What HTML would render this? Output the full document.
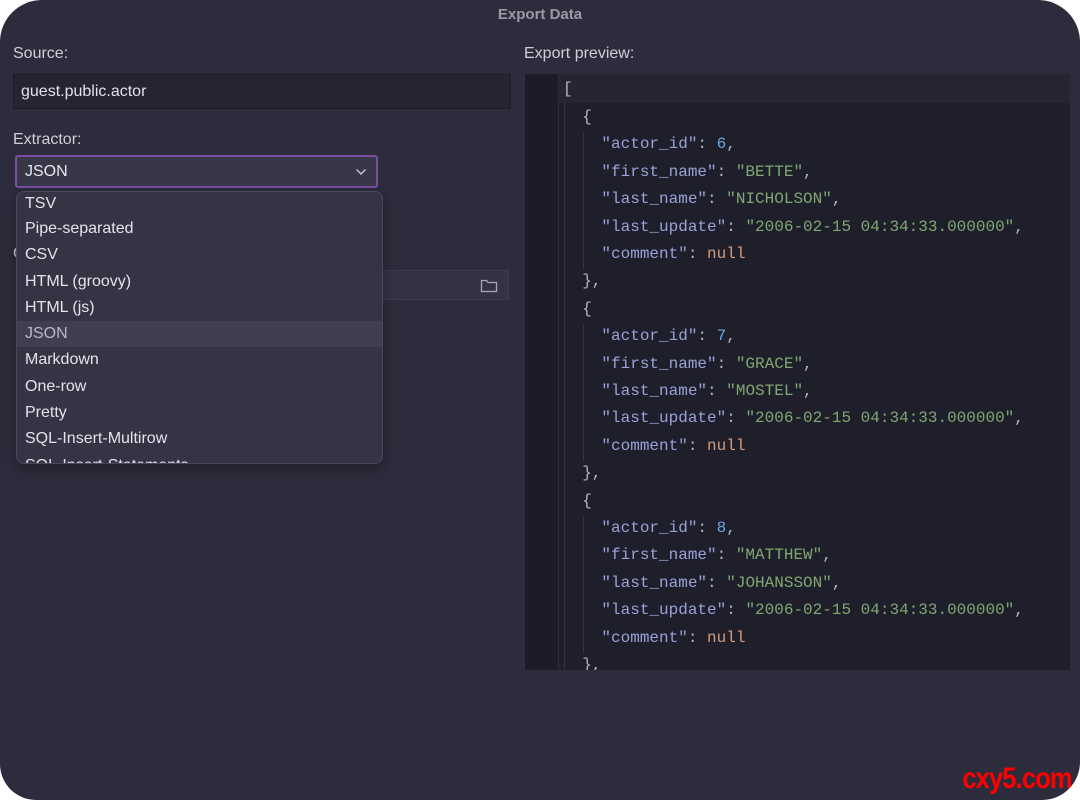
<!DOCTYPE html>
<html><head><style>
html,body{margin:0;padding:0;background:#fff;}
#win{position:relative;width:1080px;height:800px;background:#2d2c3c;border-radius:42px 42px 38px 36px;overflow:hidden;font-family:"Liberation Sans",sans-serif;color:#d6d5de;}
.t{position:absolute;}
.title{left:0;right:0;top:6px;text-align:center;font-weight:bold;font-size:15px;color:#9b9aa6;}
.lbl{font-size:16px;color:#cfced8;}
.inp{position:absolute;left:13px;top:74px;width:498px;height:35px;background:#252433;border:1px solid #1c1b27;box-sizing:border-box;font-size:16px;padding:8px 0 0 7px;color:#e2e1ea;}
.sel{position:absolute;left:15px;top:155px;width:363px;height:33px;background:#383747;border:2px solid #7a4fa3;border-radius:3px;box-sizing:border-box;font-size:16px;padding:6px 0 0 8px;color:#e8e7ef;}
.out{position:absolute;left:370px;top:270px;width:139px;height:30px;background:#343344;border:1px solid #3d3c4d;box-sizing:border-box;}
.dd{position:absolute;left:16px;top:191px;width:367px;height:273px;background:#353445;border:1px solid #4a4959;border-radius:8px;box-sizing:border-box;overflow:hidden;box-shadow:0 4px 14px rgba(0,0,0,.35);}
.dd div{height:26.3px;line-height:26.3px;font-size:16px;padding-left:8px;color:#e4e3eb;}
.dd .on{background:#403f51;color:#b9b8c4;}
.code{position:absolute;left:525px;top:74px;width:545px;height:596px;background:#1f1e2b;overflow:hidden;font-family:"Liberation Mono",monospace;font-size:16px;}
.gut{position:absolute;left:0;top:0;width:33px;height:100%;background:#1c1b27;border-right:1px solid #2e2d3b;}
.hl{position:absolute;left:34px;top:0;right:0;height:29px;background:#262534;}
.ln{position:absolute;left:38px;white-space:pre;color:#b5b4c2;height:27.4px;line-height:27.4px;}
.k{color:#9aa3d8}.s{color:#7fa872}.n{color:#6aa8e0}.nl{color:#d69a7c}.p{color:#b5b4c2}
.guide{position:absolute;width:1px;background:#33323f;}
.wm{position:absolute;right:8px;bottom:4px;color:#f00;font-weight:bold;font-size:30px;font-family:"Liberation Sans",sans-serif;letter-spacing:-1px;transform:scaleX(.85);transform-origin:right;}
</style></head><body>
<div id="win">
<div class="t title">Export Data</div>
<div class="t lbl" style="left:13px;top:45px">Source:</div>
<div class="inp">guest.public.actor</div>
<div class="t lbl" style="left:13px;top:131px">Extractor:</div>
<div class="t lbl" style="left:13px;top:245px">O</div>
<div class="out"><svg style="position:absolute;right:10px;top:7px" width="18" height="15" viewBox="0 0 18 15"><path d="M1.5 2.5h5l1.5 2h8.5v9h-15z" fill="none" stroke="#a9a8b4" stroke-width="1.3"/></svg></div>
<div class="sel">JSON<svg style="position:absolute;right:9px;top:11px" width="12" height="8" viewBox="0 0 12 8"><path d="M1.5 1.5l4.5 4.5 4.5-4.5" fill="none" stroke="#c8c7d2" stroke-width="1.4"/></svg></div>
<div class="dd">
<div style="height:24px;line-height:24px">TSV</div>
<div>Pipe-separated</div><div>CSV</div><div>HTML (groovy)</div><div>HTML (js)</div>
<div class="on">JSON</div><div>Markdown</div><div>One-row</div><div>Pretty</div><div>SQL-Insert-Multirow</div><div>SQL-Insert-Statements</div>
</div>
<div class="t lbl" style="left:524px;top:45px">Export preview:</div>
<div class="code">
<div class="gut"></div><div class="hl"></div>
<div class="guide" style="left:39px;top:29px;height:600px"></div>
<div class="guide" style="left:58px;top:58px;height:137px"></div>
<div class="guide" style="left:58px;top:250px;height:137px"></div>
<div class="guide" style="left:58px;top:442px;height:137px"></div>
<div class="ln" style="top:2px">[</div>
<div class="ln" style="top:30px">  {</div>
<div class="ln" style="top:57.4px">    <span class="k">"actor_id"</span>: <span class="n">6</span>,</div>
<div class="ln" style="top:84.8px">    <span class="k">"first_name"</span>: <span class="s">"BETTE"</span>,</div>
<div class="ln" style="top:112.2px">    <span class="k">"last_name"</span>: <span class="s">"NICHOLSON"</span>,</div>
<div class="ln" style="top:139.6px">    <span class="k">"last_update"</span>: <span class="s">"2006-02-15 04:34:33.000000"</span>,</div>
<div class="ln" style="top:167px">    <span class="k">"comment"</span>: <span class="nl">null</span></div>
<div class="ln" style="top:194.4px">  },</div>
<div class="ln" style="top:221.8px">  {</div>
<div class="ln" style="top:249.2px">    <span class="k">"actor_id"</span>: <span class="n">7</span>,</div>
<div class="ln" style="top:276.6px">    <span class="k">"first_name"</span>: <span class="s">"GRACE"</span>,</div>
<div class="ln" style="top:304px">    <span class="k">"last_name"</span>: <span class="s">"MOSTEL"</span>,</div>
<div class="ln" style="top:331.4px">    <span class="k">"last_update"</span>: <span class="s">"2006-02-15 04:34:33.000000"</span>,</div>
<div class="ln" style="top:358.8px">    <span class="k">"comment"</span>: <span class="nl">null</span></div>
<div class="ln" style="top:386.2px">  },</div>
<div class="ln" style="top:413.6px">  {</div>
<div class="ln" style="top:441px">    <span class="k">"actor_id"</span>: <span class="n">8</span>,</div>
<div class="ln" style="top:468.4px">    <span class="k">"first_name"</span>: <span class="s">"MATTHEW"</span>,</div>
<div class="ln" style="top:495.8px">    <span class="k">"last_name"</span>: <span class="s">"JOHANSSON"</span>,</div>
<div class="ln" style="top:523.2px">    <span class="k">"last_update"</span>: <span class="s">"2006-02-15 04:34:33.000000"</span>,</div>
<div class="ln" style="top:550.6px">    <span class="k">"comment"</span>: <span class="nl">null</span></div>
<div class="ln" style="top:578px">  },</div>
</div>
<div class="wm">cxy5.com</div>
</div>
</body></html>
